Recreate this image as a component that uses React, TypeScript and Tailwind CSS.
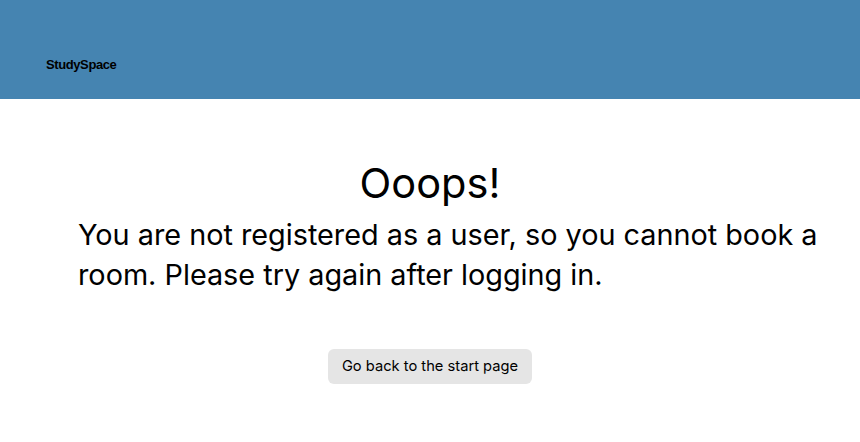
export default function App() {
  return (
    <div className="min-h-screen bg-white" style={{ fontFamily: "Inter, sans-serif" }}>
      <header className="h-[99px] bg-[#4584b1] flex items-start pt-[58px] px-[46px]">
        <span className="text-[13px] leading-[14px] font-bold text-black tracking-[-0.4px]" style={{ fontFamily: '"Liberation Sans", Arial, sans-serif' }}>
          StudySpace
        </span>
      </header>
      <main className="flex flex-col items-center">
        <h1 className="mt-[56px] text-[41.5px] leading-[56px] text-black">Ooops!</h1>
        <p className="mt-[4px] self-stretch pl-[78px] pr-[28px] text-[28.8px] leading-[40px] text-black">
          You are not registered as a user, so you cannot book a room. Please try again after logging in.
        </p>
        <button className="mt-[54px] h-[35px] px-[14px] rounded-md bg-[#e5e5e5] text-[14.7px] text-black">
          Go back to the start page
        </button>
      </main>
    </div>
  );
}
